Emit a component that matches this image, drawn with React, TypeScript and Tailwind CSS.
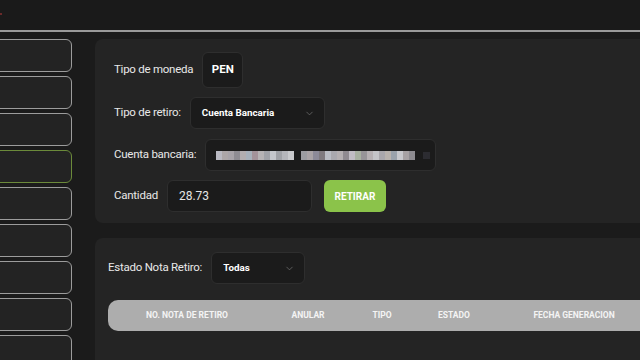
import { ChevronDown } from "lucide-react";

const BLUR_A = [
  "#b9b9c2", "#aca6a8", "#a7a3a9", "#8e8c93", "#b2aeb0", "#a7b1bb", "#a3939a",
  "#b6b3b5", "#a0a2a8", "#c4c6cb", "#9fa1a6", "#b4b5ba", "#c8c9cc",
];
const BLUR_B = [
  "#9c9ca1", "#a9a3a6", "#8c8a98", "#7f7a7f", "#b9bcc4", "#a9a8ae", "#b4afb1",
  "#8f8a90", "#c0bcc3", "#a7b0a0", "#979498", "#b6b0b3", "#c4c4c8", "#a9a7ac",
  "#b8b2ad", "#9aa2ab", "#c7c8cc", "#a6a1a3", "#8d8b90",
];

const SIDE_ITEMS = [false, false, false, true, false, false, false, false, false];

function Field({ label, children }: { label: string; children: React.ReactNode }) {
  return (
    <div className="flex items-center gap-[9px]">
      <span className="text-[11.5px] tracking-[-0.25px] text-[#e8e8e8]">{label}</span>
      {children}
    </div>
  );
}

function Select({ value, width }: { value: string; width: string }) {
  return (
    <div
      className={`flex h-[32px] items-center justify-between rounded-[6px] border border-[#2e2e2e] bg-[#1b1b1b] pl-[11px] pr-[9px] ${width}`}
    >
      <span className="text-[9.8px] font-bold text-white">{value}</span>
      <ChevronDown size={11} className="text-[#777]" strokeWidth={1.5} />
    </div>
  );
}

export default function App() {
  return (
    <div
      className="flex h-[360px] w-[640px] flex-col overflow-hidden bg-[#1b1b1b]"
      style={{ fontFamily: "Roboto, 'Liberation Sans', sans-serif" }}
    >
      <header className="relative h-[30px] shrink-0 bg-[#1a1a1a]">
        <span className="absolute left-0 top-[13px] h-[2px] w-[2px] bg-[#6a2a2a]" />
      </header>
      <div className="h-[2px] shrink-0 bg-[#9a9a9a]" />

      <div className="flex flex-1 gap-[23px] pt-[7px]">
        <nav className="flex w-[72px] flex-col gap-[4px]">
          {SIDE_ITEMS.map((active, i) => (
            <div
              key={i}
              className={`-ml-[10px] h-[33px] w-[82px] shrink-0 rounded-[6px] border bg-[#232323] ${
                active ? "border-[#6b8a3a]" : "border-[#9c9c9c]"
              }`}
            />
          ))}
        </nav>

        <main className="flex flex-1 flex-col gap-[15px]">
          <section className="flex h-[184px] shrink-0 flex-col gap-[9px] rounded-l-[8px] bg-[#242424] pl-[19px] pt-[13px]">
            <Field label="Tipo de moneda">
              <div className="flex h-[36px] w-[41px] items-center justify-center rounded-[6px] border border-[#2e2e2e] bg-[#1b1b1b] text-[11.5px] font-bold text-white">
                PEN
              </div>
            </Field>
            <Field label="Tipo de retiro:">
              <Select value="Cuenta Bancaria" width="w-[135px]" />
            </Field>
            <div className="mt-[1px]">
              <Field label="Cuenta bancaria:">
                <div className="flex h-[32px] w-[231px] items-center rounded-[6px] border border-[#2e2e2e] bg-[#1b1b1b] pl-[10px]">
                  <div className="flex h-[9px]">
                    {BLUR_A.map((c, i) => (
                      <span key={i} className="h-full w-[6px]" style={{ background: c }} />
                    ))}
                  </div>
                  <div className="ml-[7px] flex h-[9px]">
                    {BLUR_B.map((c, i) => (
                      <span key={i} className="h-full w-[6px]" style={{ background: c }} />
                    ))}
                  </div>
                  <span className="ml-[8px] h-[7px] w-[7px] bg-[#2c2c31]" />
                </div>
              </Field>
            </div>
            <div className="flex items-center gap-[12px]">
              <Field label="Cantidad">
                <div className="flex h-[32px] w-[145px] items-center rounded-[6px] border border-[#2e2e2e] bg-[#1b1b1b] pl-[11px] text-[12px] text-[#e6e6e6]">
                  28.73
                </div>
              </Field>
              <button className="flex h-[32px] w-[62px] items-center justify-center rounded-[6px] bg-[#8bc34a] text-[10px] font-bold text-white">
                RETIRAR
              </button>
            </div>
          </section>

          <section className="flex flex-1 flex-col rounded-tl-[8px] bg-[#242424] pl-[13px] pt-[14px]">
            <div className="flex items-center gap-[9px]">
              <span className="text-[11.5px] tracking-[-0.25px] text-[#e8e8e8]">Estado Nota Retiro:</span>
              <Select value="Todas" width="w-[94px]" />
            </div>
            <div className="mt-[16px] grid h-[31px] shrink-0 grid-cols-[158px_84px_64px_80px_160px] items-center rounded-l-[10px] bg-[#adadad] text-center text-[8.5px] font-bold text-[#f4f4f4]">
              <span>NO. NOTA DE RETIRO</span>
              <span>ANULAR</span>
              <span>TIPO</span>
              <span>ESTADO</span>
              <span>FECHA GENERACION</span>
            </div>
          </section>
        </main>
      </div>
    </div>
  );
}
